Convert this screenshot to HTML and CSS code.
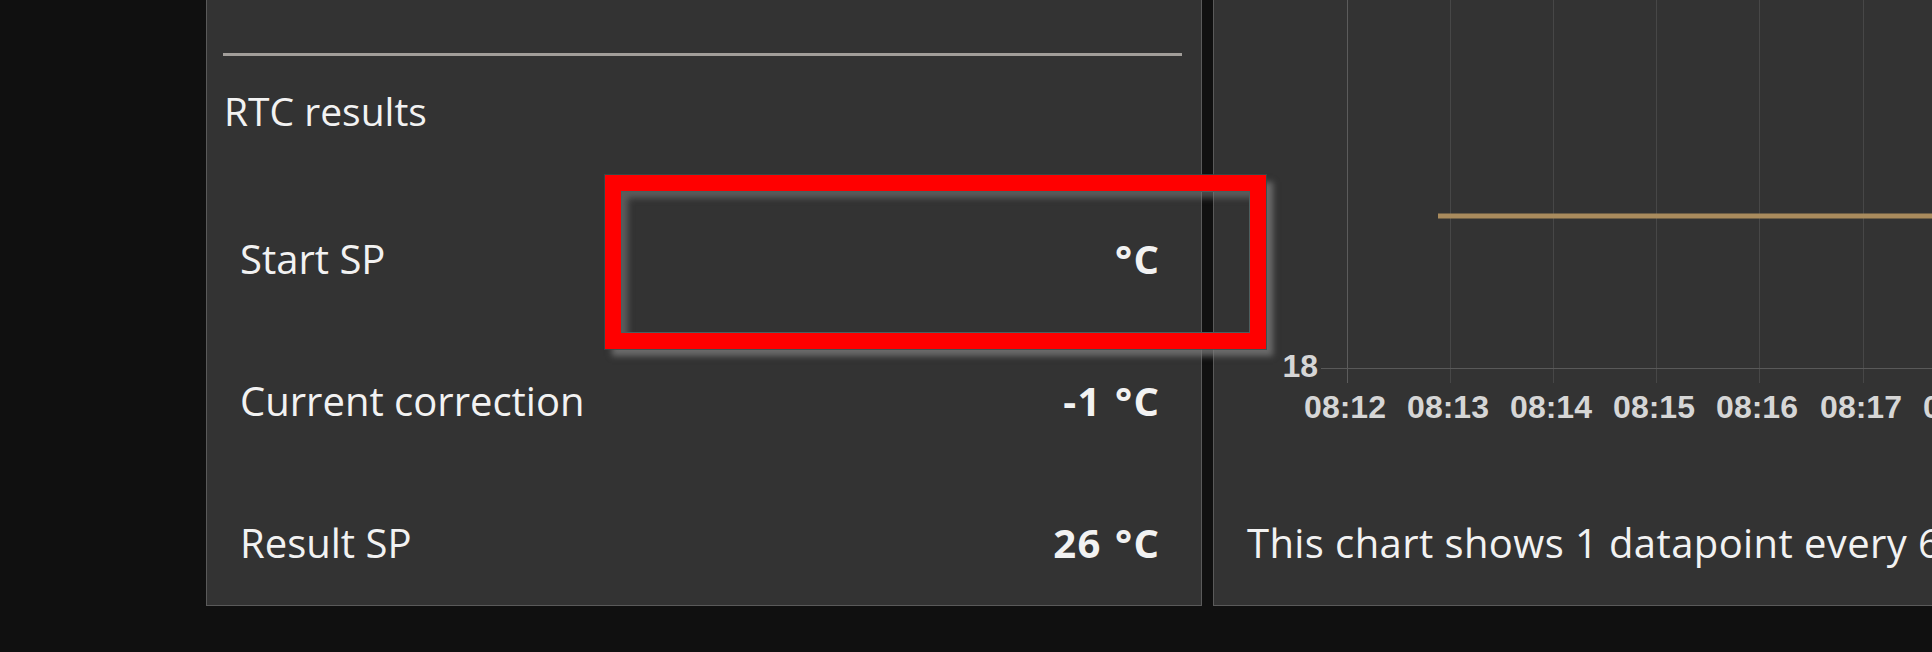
FILE: index.html
```html
<!DOCTYPE html>
<html lang="en">
<head>
    <meta charset="UTF-8">
    <meta name="viewport" content="width=device-width, initial-scale=1.0">
    <title>RTC results</title>
    <link rel="stylesheet" href="styles.css">
</head>
<body>

    <div class="layout">

        <!-- RTC results -->
        <div class="panel panel-results">
            <hr class="divider">
            <h2 class="panel-title">RTC results</h2>
            <div class="result-list">
                <div class="result-row">
                    <span class="result-label">Start SP</span>
                    <span class="result-value">°C</span>
                </div>
                <div class="result-row">
                    <span class="result-label">Current correction</span>
                    <span class="result-value">-1 °C</span>
                </div>
                <div class="result-row">
                    <span class="result-label">Result SP</span>
                    <span class="result-value">26 °C</span>
                </div>
            </div>
        </div>

        <!-- Temperature chart -->
        <div class="panel panel-chart">
            <svg class="chart" width="1000" height="517" viewBox="0 0 1000 517">
                <g class="grid">
                    <line class="axis-y" x1="133.5" y1="0" x2="133.5" y2="383"></line>
                    <line x1="236.5" y1="0" x2="236.5" y2="383"></line>
                    <line x1="339.5" y1="0" x2="339.5" y2="383"></line>
                    <line x1="442.5" y1="0" x2="442.5" y2="383"></line>
                    <line x1="545.5" y1="0" x2="545.5" y2="383"></line>
                    <line x1="649.5" y1="0" x2="649.5" y2="383"></line>
                    <line x1="752.5" y1="0" x2="752.5" y2="383"></line>
                    <line class="axis-x" x1="107" y1="368.5" x2="1000" y2="368.5"></line>
                </g>
                <line class="series" x1="224" y1="216" x2="1000" y2="216"></line>
                <text class="tick" x="104" y="377" text-anchor="end">18</text>
                <g class="tick" text-anchor="middle">
                    <text x="131" y="418">08:12</text>
                    <text x="234" y="418">08:13</text>
                    <text x="337" y="418">08:14</text>
                    <text x="440" y="418">08:15</text>
                    <text x="543" y="418">08:16</text>
                    <text x="647" y="418">08:17</text>
                    <text x="750" y="418">08:18</text>
                </g>
            </svg>
            <p class="chart-note">This chart shows 1 datapoint every 60 seconds</p>
        </div>

        <!-- screenshot annotation -->
        <div class="highlight"></div>

    </div>

</body>
</html>
```

FILE: styles.css
```css
body { margin: 0; background: #101010; color: #f2f2f2; font-family: "Open Sans", "Noto Sans", sans-serif; overflow: hidden; }

.layout { position: relative; display: flex; gap: 11px; padding-left: 206px; margin-top: -1px; }

.panel { background: #333333; border: 1px solid #5a5a5a; box-sizing: border-box; flex-shrink: 0; }
.panel-results { width: 996px; padding: 53px 19px 36px 16px; }
.panel-chart { width: 1000px; border-right: none; }

/* RTC results */
.divider { height: 3px; margin: 0; border: none; background: #a29e9a; }
.panel-title { margin: 29px 0 0 1px; font-size: 39px; font-weight: normal; line-height: 52px; }
.result-list { display: grid; row-gap: 90px; margin-top: 96px; padding: 0 23px 0 17px; }
.result-row { display: flex; justify-content: space-between; font-size: 40px; line-height: 52px; }
.result-value { font-weight: bold; letter-spacing: 1.5px; word-spacing: 1px; margin-right: -1.5px; }

/* Chart */
.chart { display: block; }
.grid line { stroke: #474747; stroke-width: 1; }
.grid .axis-y { stroke: #5c5c5c; }
.grid .axis-x { stroke: #595959; }
.series { stroke: #a98b5d; stroke-width: 5; }
.tick { font-family: "Liberation Sans", Arial, sans-serif; font-size: 32px; font-weight: bold; fill: #d6d6d6; }
.chart-note { margin: 0; padding: 0 0 36px 33px; font-size: 40px; letter-spacing: 0.4px; line-height: 52px; white-space: nowrap; }

/* Red highlight frame */
.highlight {
    position: absolute; left: 605px; top: 176px; width: 661px; height: 174px; box-sizing: border-box;
    border: 16px solid #ff0000;
    box-shadow: 0 0 0 1px rgba(55, 75, 75, 0.8), 7px 7px 6px rgba(125, 125, 125, 0.75),
        inset 0 0 0 1px #4c5e5e, inset 7px 7px 6px rgba(125, 125, 125, 0.55);
}
```
